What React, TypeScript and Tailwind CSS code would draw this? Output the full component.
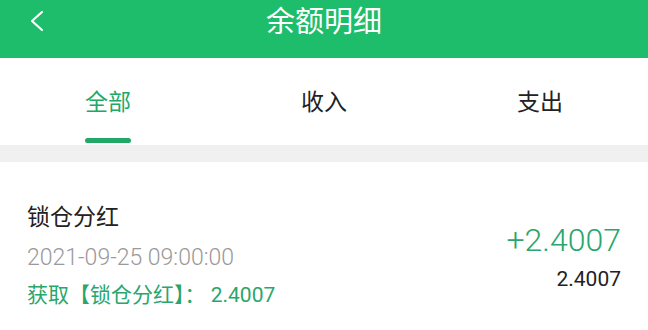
const font = { fontFamily: '"Roboto", "Noto Sans CJK SC", sans-serif' };

const tabs = ["全部", "收入", "支出"];

function BackIcon() {
  return (
    <svg width="18" height="24" viewBox="0 0 18 24" fill="none">
      <path d="M14 3 L4 12 L14 21" stroke="white" strokeWidth="2.2" strokeLinecap="round" strokeLinejoin="round" />
    </svg>
  );
}

export default function App() {
  const active = 0;

  return (
    <div className="h-[330px] w-[648px] overflow-hidden bg-white" style={font}>
      <header className="relative flex h-[58px] items-center justify-center bg-[#1dbd6b]">
        <button className="absolute left-[28px] top-[9px]">
          <BackIcon />
        </button>
        <h1 className="-mt-[12px] text-[29px] text-white">余额明细</h1>
      </header>

      <nav className="flex h-[87px] bg-white">
        {tabs.map((tab, i) => (
          <div key={tab} className="flex flex-1 flex-col items-center pt-[29px]">
            <span className={`text-[23px] leading-[32px] ${i === active ? "text-[#22a866]" : "text-[#222]"}`}>{tab}</span>
            {i === active && <span className="mt-[19px] h-[5px] w-[46px] rounded-full bg-[#22a866]" />}
          </div>
        ))}
      </nav>

      <div className="h-[17px] bg-[#f0f0f0]" />

      <div className="flex items-start justify-between px-[27px] pt-[44px]">
        <div className="flex flex-col">
          <span className="text-[23px] leading-[24px] text-[#222]">锁仓分红</span>
          <span className="mt-[16px] text-[23px] font-light leading-[24px] text-[#999]">2021-09-25 09:00:00</span>
          <span className="mt-[13px] text-[21px] leading-[24px] text-[#2aa66c]">获取【锁仓分红】： 2.4007</span>
        </div>
        <div className="flex flex-col items-end pt-[17px]">
          <span className="text-[32px] font-light leading-[34px] text-[#2aa66c]">+2.4007</span>
          <span className="mt-[10px] text-[21px] leading-[24px] text-[#222]">2.4007</span>
        </div>
      </div>
    </div>
  );
}
